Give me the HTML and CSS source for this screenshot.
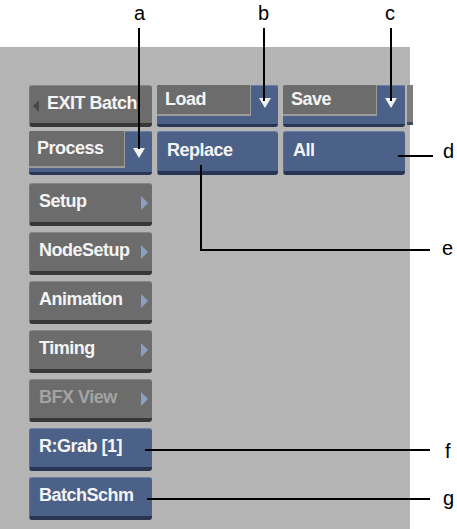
FILE: index.html
```html
<!DOCTYPE html>
<html>
<head>
<meta charset="utf-8">
<link rel="stylesheet" href="styles.css">
</head>
<body>
<div class="page">
  <div class="header"></div>
  <div class="panel">
    <div class="top">
      <div class="btn gray exit"><span class="left-tri"></span>EXIT Batch</div>
      <div class="combo short">
        <div class="field">Load</div>
        <div class="drop"><span class="down-tri"></span></div>
      </div>
      <div class="combo short">
        <div class="field">Save</div>
        <div class="drop"><span class="down-tri"></span></div>
      </div>
      <div class="stub"></div>
      <div class="combo tall">
        <div class="field">Process</div>
        <div class="drop"><span class="down-tri"></span></div>
      </div>
      <div class="btn blue">Replace</div>
      <div class="btn blue">All</div>
    </div>
    <div class="menu">
      <div class="btn gray">Setup<span class="right-tri"></span></div>
      <div class="btn gray">NodeSetup<span class="right-tri"></span></div>
      <div class="btn gray">Animation<span class="right-tri"></span></div>
      <div class="btn gray">Timing<span class="right-tri"></span></div>
      <div class="btn gray disabled">BFX View<span class="right-tri"></span></div>
      <div class="btn blue">R:Grab [1]</div>
      <div class="btn blue">BatchSchm</div>
    </div>
  </div>

  <div class="callouts">
    <span class="lbl lbl-a">a</span>
    <span class="lbl lbl-b">b</span>
    <span class="lbl lbl-c">c</span>
    <span class="lbl lbl-d">d</span>
    <span class="lbl lbl-e">e</span>
    <span class="lbl lbl-f">f</span>
    <span class="lbl lbl-g">g</span>
    <span class="vline va"></span>
    <span class="vline vb"></span>
    <span class="vline vc"></span>
    <span class="vline ve"></span>
    <span class="hline hd"></span>
    <span class="hline he"></span>
    <span class="hline hf"></span>
    <span class="hline hg"></span>
  </div>
</div>
</body>
</html>
```

FILE: styles.css
```css
* { box-sizing: border-box; }
html, body { margin: 0; padding: 0; background: #ffffff; }
.page {
  position: relative;
  width: 457px;
  height: 529px;
  overflow: hidden;
  font-family: "Liberation Sans", Arial, sans-serif;
}
.header { height: 47px; }
.panel {
  width: 410px;
  height: 482px;
  background: #b4b4b4;
  padding: 38px 0 0 29px;
}
.top {
  display: grid;
  grid-template-columns: 123px 121px 122px 3px;
  grid-template-rows: 42px 44px;
  column-gap: 5px;
  row-gap: 4px;
}
.stub {
  grid-row: 1;
  grid-column: 4;
  margin-left: -3px;
  background: #7d7d7d;
  border-bottom: 3px solid #3f4a60;
  height: 40px;
}
.btn {
  position: relative;
  height: 43px;
  border-radius: 3px;
  display: flex;
  align-items: center;
  padding: 0 0 3px 9px;
  color: #f4f4f4;
  font-weight: bold;
  font-size: 18px;
  letter-spacing: -0.5px;
  white-space: nowrap;
}
.top .btn { height: 100%; }
.gray {
  background: #6c6c6c;
  border-top: 1px solid #858585;
  border-left: 1px solid #7a7a7a;
  border-bottom: 4px solid #383838;
}
.blue {
  background: #4c6187;
  border-top: 1px solid #6a7fa3;
  border-left: 1px solid #5a6f95;
  border-bottom: 4px solid #2a3553;
}
.disabled { color: #a3a3a3; }
.exit { padding-left: 17px; }
.left-tri {
  position: absolute;
  left: 3px;
  top: 14px;
  width: 0; height: 0;
  border-top: 6px solid transparent;
  border-bottom: 6px solid transparent;
  border-right: 6px solid #474747;
}
.right-tri {
  position: absolute;
  right: 4px;
  top: 12px;
  width: 0; height: 0;
  border-top: 7px solid transparent;
  border-bottom: 7px solid transparent;
  border-left: 7px solid #8aa0c2;
}
.combo {
  display: flex;
  background: #4c6187;
  border-radius: 3px;
  border-bottom: 3px solid #2a3553;
}
.combo .field {
  display: flex;
  align-items: center;
  padding-left: 8px;
  color: #f4f4f4;
  font-weight: bold;
  font-size: 18px;
  letter-spacing: -0.5px;
  background: #6c6c6c;
  border-right: 1px solid #9a9a9a;
  border-bottom: 2px solid #9a9a9a;
  border-radius: 2px 0 0 0;
}
.short .field { width: 94px; height: 31px; }
.tall .field { width: 96px; height: 37px; }
.combo .drop {
  flex: 1;
  display: flex;
  align-items: center;
  justify-content: center;
  padding-bottom: 4px;
  border-top: 1px solid #6a7fa3;
}
.tall .drop { padding-bottom: 0; padding-top: 2px; }
.down-tri {
  width: 0; height: 0;
  border-left: 6px solid transparent;
  border-right: 6px solid transparent;
  border-top: 10px solid #f2f2f2;
}
.menu {
  display: flex;
  flex-direction: column;
  gap: 6px;
  margin-top: 8px;
  width: 123px;
}

/* callouts */
.callouts { position: absolute; inset: 0; pointer-events: none; }
.lbl {
  position: absolute;
  font-family: "Liberation Sans", Arial, sans-serif;
  font-size: 20px;
  line-height: 20px;
  color: #000;
}
.lbl-a { left: 134px; top: 3px; }
.lbl-b { left: 258px; top: 3px; }
.lbl-c { left: 385px; top: 3px; }
.lbl-d { left: 443px; top: 141px; }
.lbl-e { left: 442px; top: 238px; }
.lbl-f { left: 445px; top: 441px; }
.lbl-g { left: 443px; top: 488px; }
.vline { position: absolute; width: 2px; background: #000; }
.hline { position: absolute; height: 2px; background: #000; }
.va { left: 138px; top: 28px; height: 121px; }
.vb { left: 263px; top: 28px; height: 73px; }
.vc { left: 390px; top: 28px; height: 73px; }
.ve { left: 200px; top: 165px; height: 86px; }
.hd { left: 398px; top: 155px; width: 35px; }
.he { left: 200px; top: 249px; width: 230px; }
.hf { left: 145px; top: 449px; width: 285px; }
.hg { left: 147px; top: 498px; width: 283px; }
```
